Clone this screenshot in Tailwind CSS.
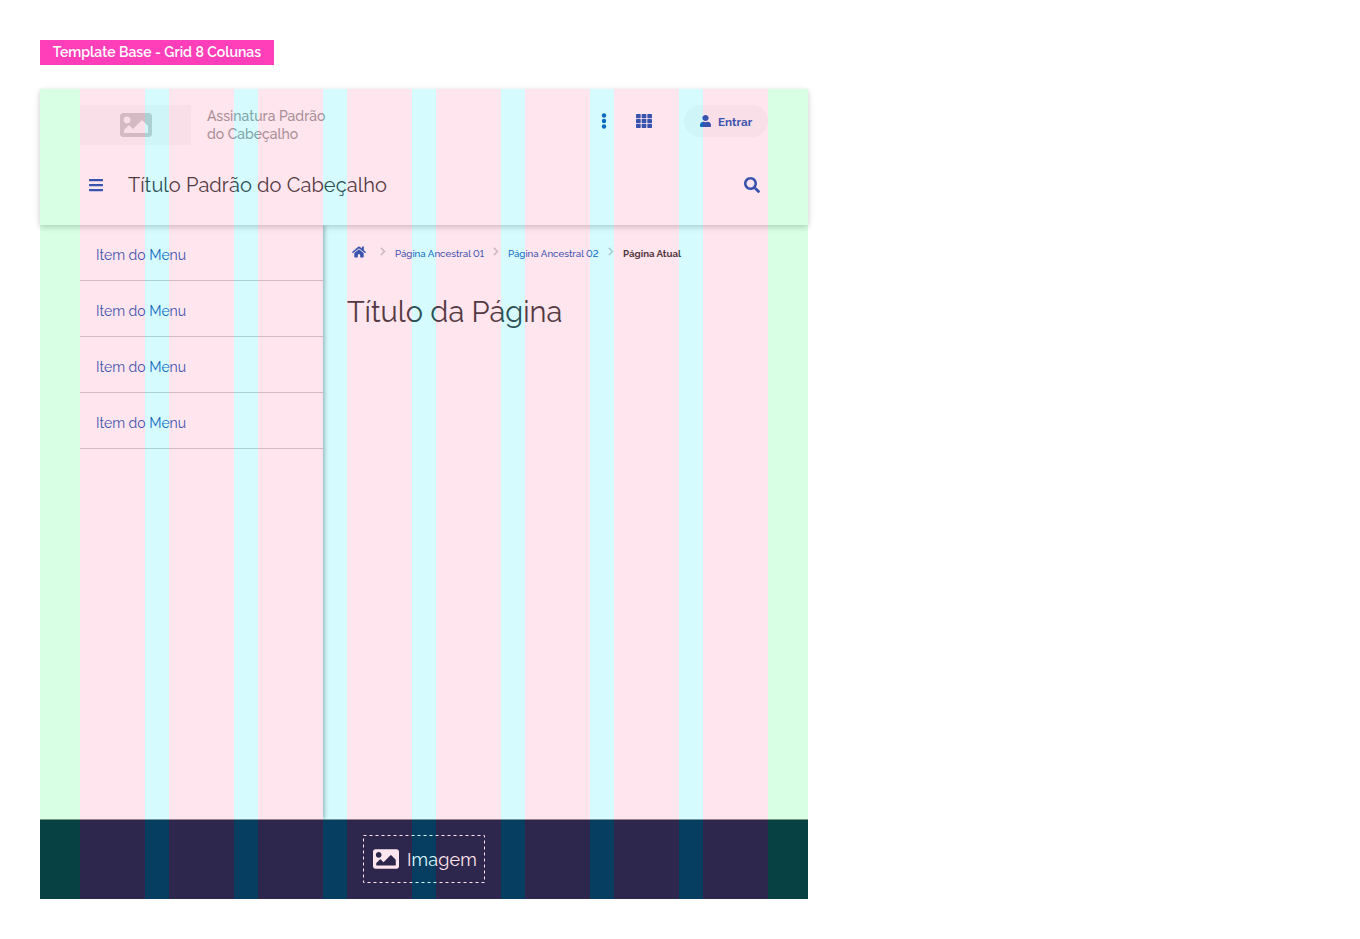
<!DOCTYPE html>
<html lang="pt-BR">
<head>
<meta charset="utf-8">
<title>Template Base - Grid 8 Colunas</title>
<script src="https://cdn.jsdelivr.net/npm/@tailwindcss/browser@4"></script>
</head>
<body class="bg-white font-['Raleway','Lato',sans-serif] lining-nums text-[#333333]">
<svg class="hidden">
  <symbol id="image" viewBox="0 0 512 512"><path d="M464 448H48c-26.51 0-48-21.49-48-48V112c0-26.51 21.49-48 48-48h416c26.51 0 48 21.49 48 48v288c0 26.51-21.49 48-48 48zM112 120c-30.928 0-56 25.072-56 56s25.072 56 56 56 56-25.072 56-56-25.072-56-56-56zM64 384h384V272l-87.515-87.515c-4.686-4.686-12.284-4.686-16.971 0L208 320l-55.515-55.515c-4.686-4.686-12.284-4.686-16.971 0L64 336v48z"/></symbol>
  <symbol id="chevron" viewBox="0 0 320 512"><path d="M285.476 272.971L91.132 467.314c-9.373 9.373-24.569 9.373-33.941 0l-22.667-22.667c-9.357-9.357-9.375-24.522-.04-33.901L188.505 256 34.484 101.255c-9.335-9.379-9.317-24.544.04-33.901l22.667-22.667c9.373-9.373 24.569-9.373 33.941 0L285.475 239.03c9.373 9.372 9.373 24.568.001 33.941z"/></symbol>
</svg>
<main class="flex flex-col items-start gap-6 p-10">
  <h2 class="flex h-[25px] w-[234px] items-center justify-center whitespace-nowrap bg-[#ff3eb9] pb-0.5 text-sm font-semibold text-white">Template Base - Grid 8 Colunas</h2>

  <div class="relative flex h-[810px] w-[768px] flex-col bg-white">
    <header class="z-10 h-[136px] bg-white px-10 pt-4 shadow-[0_2px_6px_rgba(0,0,0,0.22)]">
      <div class="flex h-10 items-start">
        <div class="flex h-10 w-[111px] items-center justify-center bg-[#f8f8f8] text-[#cccccc]"><svg class="size-8 fill-current"><use href="#image"/></svg></div>
        <p class="ml-4 mt-0.5 whitespace-nowrap text-sm font-medium leading-[18px] text-[#999999]">Assinatura Padrão<br>do Cabeçalho</p>
        <div class="ml-auto flex h-8 items-center fill-[#1351b4]">
          <span class="flex w-10 justify-center"><svg class="h-4 w-1.5" viewBox="0 0 6 16"><circle cx="3" cy="2.5" r="2.2"/><circle cx="3" cy="8" r="2.2"/><circle cx="3" cy="13.5" r="2.2"/></svg></span>
          <span class="flex w-10 justify-center"><svg class="size-4" viewBox="0 0 16 16"><rect x="0" y="1" width="4.7" height="4.2" rx=".7"/><rect x="5.65" y="1" width="4.7" height="4.2" rx=".7"/><rect x="11.3" y="1" width="4.7" height="4.2" rx=".7"/><rect x="0" y="5.9" width="4.7" height="4.2" rx=".7"/><rect x="5.65" y="5.9" width="4.7" height="4.2" rx=".7"/><rect x="11.3" y="5.9" width="4.7" height="4.2" rx=".7"/><rect x="0" y="10.8" width="4.7" height="4.2" rx=".7"/><rect x="5.65" y="10.8" width="4.7" height="4.2" rx=".7"/><rect x="11.3" y="10.8" width="4.7" height="4.2" rx=".7"/></svg></span>
          <button class="ml-5 flex h-8 w-[84px] items-center rounded-full bg-[#f8f8f8] pl-[15.5px] text-[11.7px] font-bold text-[#1351b4]"><svg class="mr-[7.5px] h-3 w-[11px]" preserveAspectRatio="none" viewBox="0 0 448 512"><path d="M224 256c70.7 0 128-57.3 128-128S294.700 0 224 0 96 57.300 96 128s57.300 128 128 128zm89.600 32h-16.700c-22.200 10.200-46.900 16-72.900 16s-50.600-5.800-72.900-16h-16.700C60.200 288 0 348.200 0 422.400V464c0 26.500 21.500 48 48 48h352c26.500 0 48-21.500 48-48v-41.600c0-74.200-60.200-134.400-134.400-134.400z"/></svg><span class="mt-[3px]">Entrar</span></button>
        </div>
      </div>
      <div class="mt-5 flex h-10 items-center fill-[#1351b4] pl-2 pr-2">
        <svg class="size-4" viewBox="0 0 448 512"><path d="M16 132h416c8.837 0 16-7.163 16-16V76c0-8.837-7.163-16-16-16H16C7.163 60 0 67.163 0 76v40c0 8.837 7.163 16 16 16zm0 160h416c8.837 0 16-7.163 16-16v-40c0-8.837-7.163-16-16-16H16c-8.837 0-16 7.163-16 16v40c0 8.837 7.163 16 16 16zm0 160h416c8.837 0 16-7.163 16-16v-40c0-8.837-7.163-16-16-16H16c-8.837 0-16 7.163-16 16v40c0 8.837 7.163 16 16 16z"/></svg>
        <h1 class="ml-6 whitespace-nowrap text-xl leading-6 tracking-[0.07px]">Título Padrão do Cabeçalho</h1>
        <svg class="ml-auto size-4" viewBox="0 0 512 512"><path d="M505 442.700L405.300 343c-4.500-4.500-10.600-7-17-7H372c27.600-35.300 44-79.700 44-128C416 93.100 322.900 0 208 0S0 93.100 0 208s93.100 208 208 208c48.300 0 92.700-16.400 128-44v16.300c0 6.400 2.500 12.500 7 17l99.700 99.700c9.400 9.400 24.600 9.400 33.900 0l28.300-28.300c9.400-9.400 9.400-24.600.1-34zM208 336c-70.700 0-128-57.200-128-128 0-70.700 57.200-128 128-128 70.700 0 128 57.200 128 128 0 70.700-57.200 128-128 128z"/></svg>
      </div>
    </header>

    <div class="flex flex-1 pl-10">
      <nav class="w-[243px] text-sm text-[#1351b4] shadow-[1px_0_5px_rgba(0,0,0,0.4)] [clip-path:inset(0_-10px_0_0)]">
        <a class="flex h-14 items-center border-b border-[#cccccc] pl-4 pt-[5px]">Item do Menu</a>
        <a class="flex h-14 items-center border-b border-[#cccccc] pl-4 pt-[5px]">Item do Menu</a>
        <a class="flex h-14 items-center border-b border-[#cccccc] pl-4 pt-[5px]">Item do Menu</a>
        <a class="flex h-14 items-center border-b border-[#cccccc] pl-4 pt-[5px]">Item do Menu</a>
      </nav>
      <section class="flex-1 pl-6">
        <div class="mt-[22px] flex h-3.5 items-center whitespace-nowrap text-[9.7px] font-medium leading-[14px] text-[#1351b4]">
          <svg class="ml-[5px] mb-[5px] h-3.5 w-3.5 fill-current" viewBox="0 0 576 512"><path d="M280.370 148.260L96 300.110V464a16 16 0 0 0 16 16l112.060-.290a16 16 0 0 0 15.920-16V368a16 16 0 0 1 16-16h64a16 16 0 0 1 16 16v95.640a16 16 0 0 0 16 16.050L464 480a16 16 0 0 0 16-16V300L295.670 148.260a12.190 12.190 0 0 0-15.300 0zM571.600 251.470L488 182.560V44.050a12 12 0 0 0-12-12h-56a12 12 0 0 0-12 12v72.610L318.470 43a48 48 0 0 0-61 0L4.340 251.470a12 12 0 0 0-1.600 16.900l25.500 31A12 12 0 0 0 45.150 301l235.220-193.740a12.190 12.190 0 0 1 15.300 0L530.900 301a12 12 0 0 0 16.900-1.600l25.500-31a12 12 0 0 0-1.700-16.930z"/></svg>
          <svg class="mb-1.5 ml-3.5 mr-[9px] h-[9px] w-1.5 fill-[#cccccc] stroke-[#cccccc] stroke-[24px]"><use href="#chevron"/></svg>
          <span class="w-[98px]">Página Ancestral 01</span>
          <svg class="mb-1.5 mr-[9px] h-[9px] w-1.5 fill-[#cccccc] stroke-[#cccccc] stroke-[24px]"><use href="#chevron"/></svg>
          <span class="w-[100px]">Página Ancestral 02</span>
          <svg class="mb-1.5 mr-[9px] h-[9px] w-1.5 fill-[#cccccc] stroke-[#cccccc] stroke-[24px]"><use href="#chevron"/></svg>
          <span class="font-bold text-[#333333]">Página Atual</span>
        </div>
        <h2 class="mt-[33px] whitespace-nowrap text-[29px] leading-9">Título da Página</h2>
      </section>
    </div>

    <footer class="flex h-20 items-center justify-center border-t border-[#888888] bg-[#071d41] pb-px text-white">
      <div class="relative flex h-12 w-[122px] items-center pl-2.5">
        <svg class="absolute inset-0 h-12 w-[122px] fill-none stroke-white"><rect x=".5" y=".5" width="121" height="47" stroke-dasharray="3 3"/></svg>
        <svg class="size-[26px] fill-current"><use href="#image"/></svg>
        <span class="ml-2 mt-px text-lg leading-6 tracking-[0.15px]">Imagem</span>
      </div>
    </footer>

    <div class="absolute inset-0 z-20 flex justify-between">
      <i class="w-10 bg-[rgba(10,255,86,0.16)]"></i>
      <div class="flex flex-1 gap-6 bg-[linear-gradient(90deg,transparent_65px,rgba(0,232,255,0.16)_65px)] bg-[length:89px_100%]">
        <i class="w-[65px] bg-[rgba(255,92,142,0.16)]"></i>
        <i class="w-[65px] bg-[rgba(255,92,142,0.16)]"></i>
        <i class="w-[65px] bg-[rgba(255,92,142,0.16)]"></i>
        <i class="w-[65px] bg-[rgba(255,92,142,0.16)]"></i>
        <i class="w-[65px] bg-[rgba(255,92,142,0.16)]"></i>
        <i class="w-[65px] bg-[rgba(255,92,142,0.16)]"></i>
        <i class="w-[65px] bg-[rgba(255,92,142,0.16)]"></i>
        <i class="w-[65px] bg-[rgba(255,92,142,0.16)]"></i>
      </div>
      <i class="w-10 bg-[rgba(10,255,86,0.16)]"></i>
    </div>
  </div>
</main>
</body>
</html>
